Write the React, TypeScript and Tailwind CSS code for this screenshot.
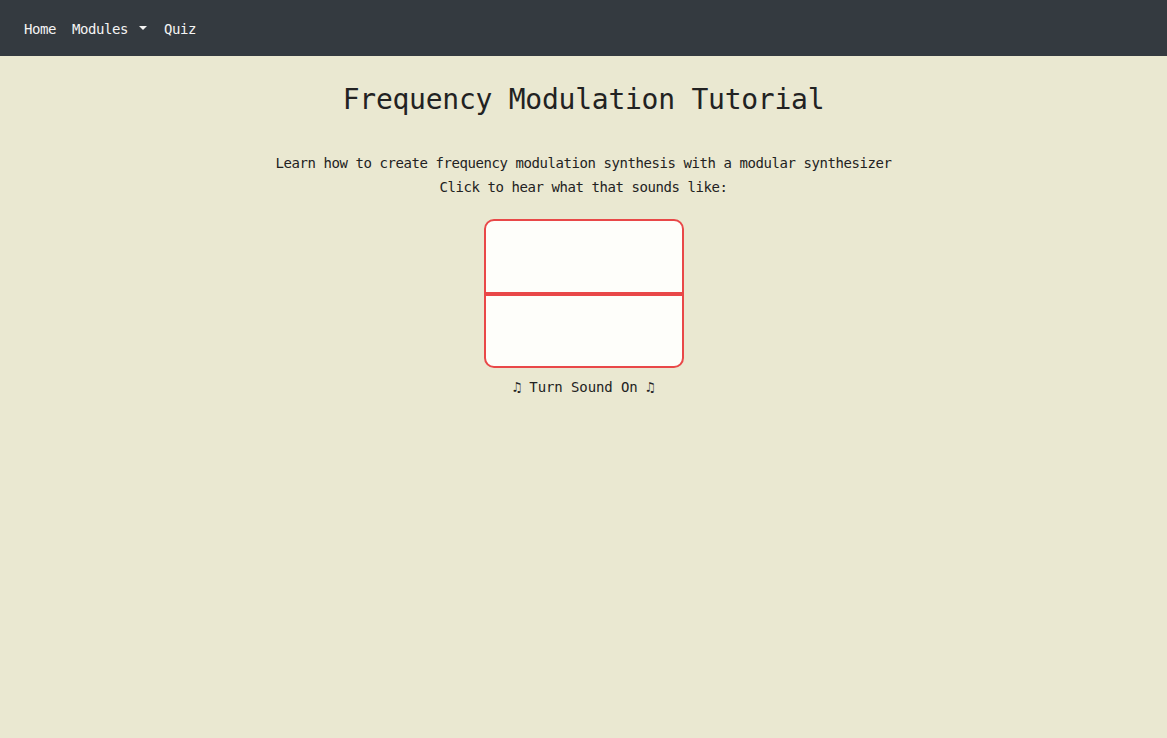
import React from "react";

const mono = "font-['DejaVu_Sans_Mono','Liberation_Mono',monospace]";

export default function App() {
  return (
    <div className={`min-h-[738px] w-full bg-[#eae8d1] text-[#212529] ${mono}`}>
      <nav className="flex h-[56px] items-center bg-[#343a40] px-4 pt-[2px]">
        <a className="px-2 text-[14px] tracking-[-0.43px] text-[#f4f4f4]">Home</a>
        <a className="flex items-center pl-2 pr-[9px] text-[14px] tracking-[-0.43px] text-[#f4f4f4]">
          Modules
          <span className="ml-[11px] mt-[-3px] h-0 w-0 border-x-[4px] border-t-[4px] border-x-transparent border-t-[#f4f4f4]" />
        </a>
        <a className="px-2 text-[14px] tracking-[-0.43px] text-[#f4f4f4]">Quiz</a>
      </nav>
      <main className="flex flex-col items-center">
        <h1 className="mt-[24px] text-[28px] leading-[40px] tracking-[-0.25px] text-[#222222]">
          Frequency Modulation Tutorial
        </h1>
        <div className="mt-[31px] text-center text-[14px] leading-[24px] tracking-[-0.43px] text-[#222222]">
          <p>Learn how to create frequency modulation synthesis with a modular synthesizer</p>
          <p>Click to hear what that sounds like:</p>
        </div>
        <div className="ml-[1px] mt-[20px] flex h-[149px] w-[200px] flex-col justify-center rounded-[10px] border-2 border-[#e94848] bg-[#fefefa]">
          <div className="h-[4px] w-full bg-[#e94848]" />
        </div>
        <p className="mt-[7px] text-[14px] leading-[24px] tracking-[-0.1px] text-[#222222]">
          ♫ Turn Sound On ♫
        </p>
      </main>
    </div>
  );
}
